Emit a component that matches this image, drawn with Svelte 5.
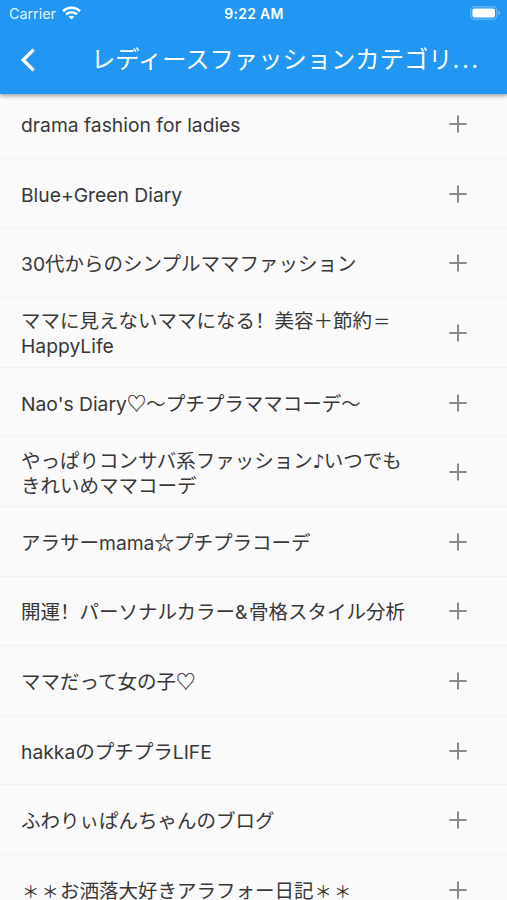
<script>
  const rows = [
    ['drama fashion for ladies'],
    ['Blue+Green Diary'],
    ['30代からのシンプルママファッション'],
    ['ママに見えないママになる！美容＋節約＝', 'HappyLife'],
    ["Nao's Diary♡〜プチプラママコーデ〜"],
    ['やっぱりコンサバ系ファッション♪いつでも', 'きれいめママコーデ'],
    ['アラサーmama☆プチプラコーデ'],
    ['開運！パーソナルカラー&骨格スタイル分析'],
    ['ママだって女の子♡'],
    ['hakkaのプチプラLIFE'],
    ['ふわりぃぱんちゃんのブログ'],
    ['＊＊お洒落大好きアラフォー日記＊＊']
  ];

  // Splits a line into Latin, symbol and Japanese runs
  const runs = (line) => line.match(/&|[\x20-\x25\x27-\x7e]+|[♪♡☆！＊＝]|[^\x20-\x7e♪♡☆！＊＝]+/g);
  const symbols = { '♪': 'note', '♡': 'heart', '☆': 'star', '！': 'bang', '＊': 'aster', '＝': 'equals', '&': 'amp' };
  const kind = (run) => symbols[run] ?? (/^[\x20-\x7e]/.test(run) ? 'latin' : 'kana');
</script>

<div class="screen">
  <header>
    <div class="status">
      <div class="carrier">
        <span>Carrier</span>
        <svg width="19" height="14" viewBox="0 0 19 14" fill="none" stroke="#fff" stroke-width="2.7">
          <path d="M1 5.2C5.6.6 13.4.6 18 5.2" />
          <path d="M4 8.4c3-2.9 8-2.9 11 0" />
          <path d="M6.6 10.8c1.6-1.5 4.2-1.5 5.8 0L9.5 13.6z" fill="#fff" stroke="none" />
        </svg>
      </div>
      <span class="time">9:22 AM</span>
      <svg class="battery" width="31" height="14" viewBox="0 0 31 14">
        <rect x=".7" y=".7" width="26" height="12.6" rx="3.8" fill="none" stroke="#fff" stroke-opacity=".28" stroke-width="1.4" />
        <rect x="2.4" y="2.5" width="22.6" height="9" rx="2" fill="#fff" />
        <path d="M28.3 4.6c2 .8 2 4 0 4.8z" fill="#fff" fill-opacity=".4" />
      </svg>
    </div>
    <div class="bar">
      <svg class="back" width="16" height="26" viewBox="0 0 16 26" fill="none" stroke="#fff" stroke-width="3.4">
        <path d="M14.6 2.6 4.2 13l10.4 10.4" />
      </svg>
      <h1>レディースファッションカテゴリ<span class="dots">...</span></h1>
    </div>
  </header>

  <main>
    {#each rows as lines}
      <div class="row">
        <div class="label">
          {#each lines as line}
            <div class="line">{#each runs(line) as run}<span class={kind(run)}>{run}</span>{/each}</div>
          {/each}
        </div>
        <svg width="18" height="18" viewBox="0 0 18 18" stroke="#8a8a8a" stroke-width="2">
          <path d="M9 .4v17.2M.4 9h17.2" />
        </svg>
      </div>
    {/each}
  </main>
</div>

<style>
  .screen {
    width: 507px;
    height: 900px;
    overflow: hidden;
    background: #fafafa;
    font-family: Inter, 'Noto Sans CJK JP', sans-serif;
    display: flex;
    flex-direction: column;
  }
  header {
    flex: none;
    height: 94px;
    background: #2196f3;
    color: #fff;
    box-shadow: 0 2px 4px rgba(0, 0, 0, 0.36);
    z-index: 1;
  }
  .status {
    height: 27px;
    display: grid;
    grid-template-columns: 1fr auto 1fr;
    align-items: center;
    padding: 0 6px 0 9px;
    font-size: 14.3px;
  }
  .carrier {
    display: flex;
    align-items: center;
    gap: 6px;
    color: rgba(255, 255, 255, 0.9);
  }
  .carrier svg {
    margin-top: -2px;
  }
  .time {
    font-weight: 600;
    font-size: 14px;
    letter-spacing: 0.3px;
    margin-left: -2px;
  }
  .battery {
    justify-self: end;
    margin-top: -1px;
  }
  .bar {
    height: 64px;
    display: flex;
    align-items: center;
    padding-left: 19px;
  }
  .back {
    margin-top: 2px;
    margin-right: 56px;
  }
  h1 {
    margin: -2px 0 0;
    font: 400 24.3px/36px 'Noto Sans CJK JP', sans-serif;
    white-space: nowrap;
  }
  .dots {
    font-family: Inter, sans-serif;
    letter-spacing: 2.4px;
  }
  main {
    margin-top: -4.6px;
  }
  .row {
    height: 69.6px;
    box-sizing: border-box;
    border-bottom: 1px solid #f1f1f1;
    display: flex;
    align-items: center;
    justify-content: space-between;
    padding: 0 40px 0 21px;
  }
  .row svg {
    margin-top: 1px;
  }
  .line {
    height: 25px;
    white-space: nowrap;
    font: 400 19.5px/25px 'Noto Sans CJK JP', sans-serif;
    color: #383838;
  }
  .latin,
  .amp {
    font-family: Inter, sans-serif;
    font-size: 19.3px;
    line-height: 0;
  }
  .amp {
    letter-spacing: 1.5px;
  }
  .bang {
    font-family: 'Noto Sans CJK SC', sans-serif;
    line-height: 0;
  }
  .heart,
  .star,
  .note,
  .aster,
  .equals {
    display: inline-block;
    width: 19.5px;
    line-height: 0;
    text-align: center;
  }
  .heart {
    -webkit-text-stroke: 0.2px #383838;
  }
  .star {
    -webkit-text-stroke: 0.3px #383838;
  }
  .aster {
    font-size: 17px;
  }
  .equals {
    font-size: 17px;
  }
  .note {
    width: 11px;
    font-size: 19px;
    font-family: 'DejaVu Sans', sans-serif;
  }
</style>
